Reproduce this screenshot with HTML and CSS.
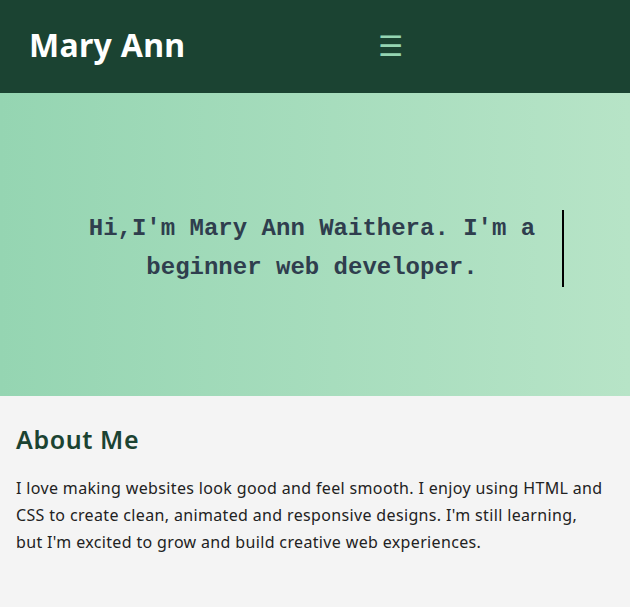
FILE: index.html
```html
<!DOCTYPE html>
<html lang="en">
<head>
<meta charset="utf-8">
<title>Mary Ann</title>
<link rel="stylesheet" href="styles.css">
</head>
<body>
<header class="site-header">
  <div class="logo">Mary Ann</div>
  <button class="menu-toggle" aria-label="Menu">☰</button>
  <nav class="nav"></nav>
</header>
<section class="hero">
  <h1 class="typing">Hi,I'm Mary Ann Waithera. I'm a beginner web developer.</h1>
</section>
<section class="about">
  <h2 class="about-title">About Me</h2>
  <p class="about-text">I love making websites look good and feel smooth. I enjoy using HTML and CSS to create clean, animated and responsive designs. I'm still learning, but I'm excited to grow and build creative web experiences.</p>
</section>
</body>
</html>
```

FILE: styles.css
```css
* { box-sizing: border-box; }
html, body { margin: 0; padding: 0; }
body {
  background: #f4f4f4;
  font-family: "Noto Sans", "Open Sans", sans-serif;
  color: #222;
}
.site-header {
  height: 93px;
  background: #1b4332;
  display: flex;
  align-items: center;
  padding: 0 29px 4px;
}
.logo {
  color: #fff;
  font-size: 32px;
  font-weight: 700;
  letter-spacing: 0.3px;
  width: 349px;
}
.menu-toggle {
  background: none;
  border: 0;
  padding: 0;
  margin-top: 4px;
  color: #95d5b2;
  font-family: "DejaVu Sans", sans-serif;
  font-size: 28px;
  line-height: 1;
  cursor: pointer;
}
.hero {
  height: 303px;
  background: linear-gradient(90deg, #95d5b2, #b7e4c7);
  display: flex;
  align-items: center;
  justify-content: center;
  padding: 8px 4px 0 0;
}
.typing {
  margin: 0;
  width: 502px;
  font-family: "Liberation Mono", "Courier New", monospace;
  font-size: 24px;
  font-weight: 700;
  line-height: 38.4px;
  text-align: center;
  color: #2f3e4e;
  border-right: 2px solid #000;
}
.about {
  padding: 26px 16px 40px;
}
.about-title {
  margin: 0 0 19px;
  color: #1b4332;
  font-size: 25px;
  font-weight: 600;
  letter-spacing: 0.6px;
}
.about-text {
  margin: 0;
  max-width: 592px;
  font-size: 16px;
  line-height: 27px;
  letter-spacing: 0.35px;
  color: #222;
}
```
